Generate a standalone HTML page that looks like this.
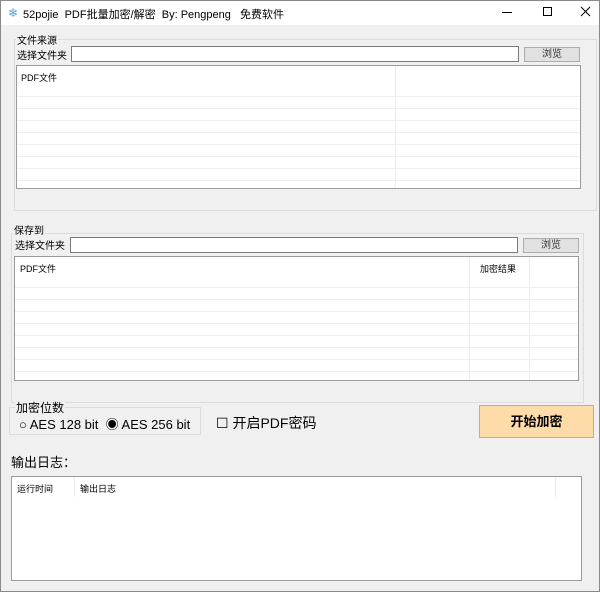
<html><head><style>
body{margin:0;width:600px;height:592px;overflow:hidden;font-family:"Liberation Sans","Noto Sans CJK SC",sans-serif;font-size:10px;color:#000}
.win{position:absolute;left:0;top:0;width:598px;height:590px;border:1px solid #8a8a8a;background:#f0f0f0}
.a{position:absolute}
.title{left:0;top:0;width:598px;height:24px;background:#fff}
.grp{position:absolute;border:1px solid #dcdcdc}
.lbl{position:absolute;background:#f0f0f0;padding:0 1px;white-space:nowrap}
.inp{position:absolute;background:#fff;border:1px solid #7a7a7a;height:14px}
.btn{position:absolute;background:#e1e1e1;border:1px solid #adadad;height:13px;text-align:center;line-height:13px;font-size:10px;color:#333}
.list{position:absolute;background:#fff;border:1px solid #9a9a9a;overflow:hidden}
.rows{position:absolute;left:0;right:0;background:repeating-linear-gradient(to bottom,transparent 0 11px,#eeeeee 11px 12px)}
.col{position:absolute;top:0;bottom:0;width:1px;background:#ececec}
.h{position:absolute;font-size:9px}
</style></head><body><div class="win">
<div class="a title">
 <div class="a" style="left:7px;top:5px;color:#5aa0e0;font-size:12px">❄</div>
 <div class="a" style="left:22px;top:5px;font-size:11px;white-space:nowrap">52pojie&nbsp; PDF批量加密/解密&nbsp; By: Pengpeng&nbsp;&nbsp; 免费软件</div>
 <svg class="a" style="left:500px;top:5px" width="90" height="12"><path d="M1 6.5H11" stroke="#000"/><rect x="42.5" y="1.5" width="8" height="8" fill="none" stroke="#000"/><path d="M80 1L89 10M89 1L80 10" stroke="#000"/></svg>
</div>

<div class="grp" style="left:13px;top:38px;width:581px;height:170px"></div>
<div class="lbl" style="left:15px;top:31px">文件来源</div>
<div class="a" style="left:16px;top:46px">选择文件夹</div>
<div class="inp" style="left:70px;top:45px;width:446px"></div>
<div class="btn" style="left:523px;top:46px;width:54px">浏览</div>
<div class="list" style="left:15px;top:64px;width:563px;height:122px">
 <div class="rows" style="top:19px;bottom:0"></div>
 <div class="col" style="left:378px"></div>
 <div class="h" style="left:4px;top:5px">PDF文件</div>
</div>

<div class="grp" style="left:10px;top:232px;width:571px;height:168px"></div>
<div class="lbl" style="left:12px;top:221px">保存到</div>
<div class="a" style="left:14px;top:236px">选择文件夹</div>
<div class="inp" style="left:69px;top:236px;width:446px"></div>
<div class="btn" style="left:522px;top:237px;width:54px">浏览</div>
<div class="list" style="left:13px;top:255px;width:563px;height:123px">
 <div class="rows" style="top:19px;bottom:0"></div>
 <div class="col" style="left:454px"></div>
 <div class="col" style="left:514px"></div>
 <div class="h" style="left:5px;top:5px">PDF文件</div>
 <div class="h" style="left:465px;top:5px">加密结果</div>
</div>

<div class="grp" style="left:8px;top:406px;width:190px;height:26px"></div>
<div class="lbl" style="left:14px;top:398px;font-size:12px">加密位数</div>
<div class="a" style="left:18px;top:413px;font-size:13px;white-space:nowrap">○ AES 128 bit&nbsp; ◉ AES 256 bit</div>
<div class="a" style="left:215px;top:412px;font-size:14px;white-space:nowrap">☐ 开启PDF密码</div>
<div class="a" style="left:478px;top:404px;width:113px;height:31px;background:#fedcaa;border:1px solid #b0b0b0;text-align:center;line-height:31px;font-size:13px;font-weight:bold">开始加密</div>

<div class="a" style="left:10px;top:451px;font-size:13px">输出日志：</div>
<div class="list" style="left:10px;top:475px;width:569px;height:103px">
 <div class="col" style="left:62px;height:20px"></div>
 <div class="col" style="left:543px;height:20px"></div>
 <div class="h" style="left:5px;top:5px">运行时间</div>
 <div class="h" style="left:68px;top:5px">输出日志</div>
</div>
</div></body></html>
